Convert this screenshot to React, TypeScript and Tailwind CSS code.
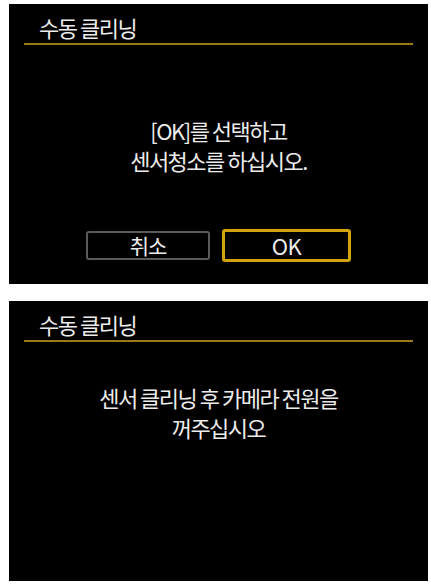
import React from "react";

const font = { fontFamily: '"Noto Sans CJK KR", "Noto Sans", sans-serif' };

function Header() {
  return (
    <div>
      <div className="pt-[10px] px-[30px] text-[22px] leading-[26px] tracking-[-1.5px] text-[#ececec]">
        수동 클리닝
      </div>
      <div className="mt-[3px] mx-[15px] h-[2px] bg-[#9a7a16]" />
    </div>
  );
}

export default function App() {
  return (
    <div className="bg-white min-h-screen pt-[4px] pl-[9px]" style={font}>
      {/* screen 1 */}
      <div className="w-[419px] h-[280px] bg-black flex flex-col">
        <Header />
        <div className="mt-[70px] text-center text-[22px] leading-[30px] tracking-[-1.5px] text-[#ececec]">
          <div>[OK]를 선택하고</div>
          <div>센서청소를 하십시오.</div>
        </div>
        <div className="mt-[54px] flex items-center justify-center gap-[12px]">
          <div className="w-[124px] h-[29px] border-2 border-[#5a5a5a] rounded-[3px] flex items-center justify-center text-[21px] leading-none tracking-[-1px] text-[#ececec]">
            취소
          </div>
          <div className="w-[129px] h-[33px] pb-[2px] border-[3px] border-[#d1a30c] rounded-[3px] flex items-center justify-center text-[22px] leading-none tracking-[-0.5px] text-[#ececec]">
            OK
          </div>
        </div>
      </div>

      {/* screen 2 */}
      <div className="mt-[17px] w-[419px] h-[280px] bg-black flex flex-col">
        <Header />
        <div className="mt-[40px] text-center text-[22px] leading-[30px] tracking-[-1.5px] text-[#ececec]">
          <div>센서 클리닝 후 카메라 전원을</div>
          <div>꺼주십시오</div>
        </div>
      </div>
    </div>
  );
}
